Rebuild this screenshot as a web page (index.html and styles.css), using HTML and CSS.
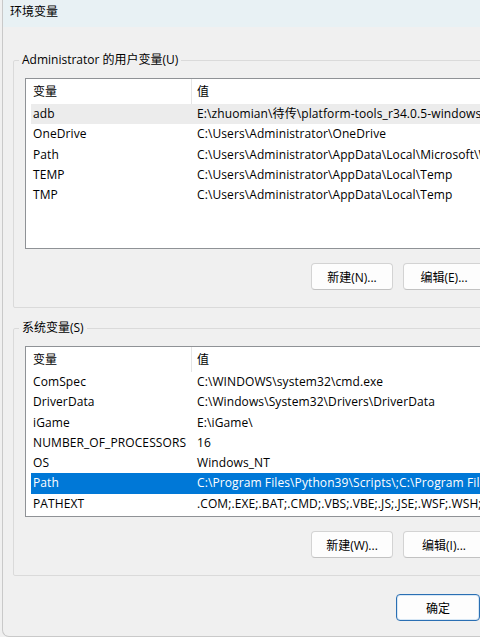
FILE: index.html
```html
<!DOCTYPE html>
<html lang="zh-CN">
<head>
<meta charset="utf-8">
<title>环境变量</title>
<link rel="stylesheet" href="styles.css">
</head>
<body>
<div class="window">
  <div class="titlebar">环境变量</div>
  <div class="content">
    <fieldset class="group">
      <legend>Administrator 的用户变量(U)</legend>
      <div class="list">
        <div class="row head"><span class="name">变量</span><span class="value">值</span></div>
        <div class="row soft"><span class="name">adb</span><span class="value">E:\zhuomian\待传\platform-tools_r34.0.5-windows\platform-tools</span></div>
        <div class="row"><span class="name">OneDrive</span><span class="value">C:\Users\Administrator\OneDrive</span></div>
        <div class="row"><span class="name">Path</span><span class="value">C:\Users\Administrator\AppData\Local\Microsoft\WindowsApps;</span></div>
        <div class="row"><span class="name">TEMP</span><span class="value">C:\Users\Administrator\AppData\Local\Temp</span></div>
        <div class="row"><span class="name">TMP</span><span class="value">C:\Users\Administrator\AppData\Local\Temp</span></div>
      </div>
      <div class="actions">
        <button class="btn">新建(N)...</button>
        <button class="btn">编辑(E)...</button>
      </div>
    </fieldset>

    <fieldset class="group">
      <legend>系统变量(S)</legend>
      <div class="list">
        <div class="row head"><span class="name">变量</span><span class="value">值</span></div>
        <div class="row"><span class="name">ComSpec</span><span class="value">C:\WINDOWS\system32\cmd.exe</span></div>
        <div class="row"><span class="name">DriverData</span><span class="value">C:\Windows\System32\Drivers\DriverData</span></div>
        <div class="row"><span class="name">iGame</span><span class="value">E:\iGame\</span></div>
        <div class="row"><span class="name">NUMBER_OF_PROCESSORS</span><span class="value">16</span></div>
        <div class="row"><span class="name">OS</span><span class="value">Windows_NT</span></div>
        <div class="row selected"><span class="name">Path</span><span class="value">C:\Program Files\Python39\Scripts\;C:\Program Files\Python39\</span></div>
        <div class="row"><span class="name">PATHEXT</span><span class="value">.COM;.EXE;.BAT;.CMD;.VBS;.VBE;.JS;.JSE;.WSF;.WSH;.MSC</span></div>
      </div>
      <div class="actions">
        <button class="btn">新建(W)...</button>
        <button class="btn">编辑(I)...</button>
      </div>
    </fieldset>

    <div class="footer">
      <button class="btn primary">确定</button>
    </div>
  </div>
</div>
</body>
</html>
```

FILE: styles.css
```css
html, body {
  margin: 0;
  padding: 0;
  overflow: hidden;
  background: #f0f0f0;
}

body {
  font-family: "Open Sans", "Noto Sans CJK SC", sans-serif;
  font-size: 12px;
  color: #000;
}

.window {
  margin-left: 2px;
  width: 530px;
  height: 636px;
  border-left: 1px solid #c9c9c9;
  border-bottom: 1px solid #c9c9c9;
  border-bottom-left-radius: 7px;
  background: #f0f0f0;
  overflow: hidden;
}

.titlebar {
  height: 27px;
  line-height: 22px;
  padding-left: 7px;
  background: #e8f1f4;
  font-family: "Noto Sans CJK SC", sans-serif;
}

.content {
  padding: 25px 0 0 10px;
}

.group {
  margin: 0;
  width: 498px;
  padding: 10px 11px 17px 11px;
  border: 1px solid #dadada;
  border-radius: 2px;
  box-sizing: border-box;
}

.group + .group {
  margin-top: 12px;
}

.group legend {
  margin-left: -6px;
  padding: 0 3px;
  line-height: 16px;
}

.list {
  height: 171px;
  box-sizing: border-box;
  border: 1px solid #8f9296;
  background: #fff;
  padding-left: 5px;
  overflow: hidden;
}

.row {
  display: grid;
  grid-template-columns: 161px 1fr;
  height: 20.3px;
  line-height: 20px;
  white-space: nowrap;
  letter-spacing: 0.1px;
}

.row .name {
  padding-left: 2px;
  overflow: hidden;
}

.row .value {
  padding-left: 5px;
}

.row.head {
  height: 25px;
  line-height: 25px;
  margin-left: -5px;
  padding-left: 5px;
}

.row.head .name {
  border-right: 1px solid #e5e5e5;
}

.row.soft {
  background: #ececec;
}

.row.selected {
  background: #0078d7;
  color: #fff;
}

.actions {
  display: flex;
  gap: 10px;
  margin-top: 14px;
  padding-left: 286px;
}

.btn {
  font: inherit;
  width: 82px;
  height: 27px;
  padding: 0;
  background: #fdfdfd;
  border: 1px solid #d3d3d3;
  border-bottom-color: #c2c2c2;
  border-radius: 4px;
  color: #000;
  flex: none;
}

.footer {
  display: flex;
  padding: 18px 0 0 383px;
}

.btn.primary {
  width: 84px;
  border: 1px solid #2a6fb3;
  box-shadow: inset 0 0 0 1px #d7e7f5;
  background: #fdfdfd;
}
```
